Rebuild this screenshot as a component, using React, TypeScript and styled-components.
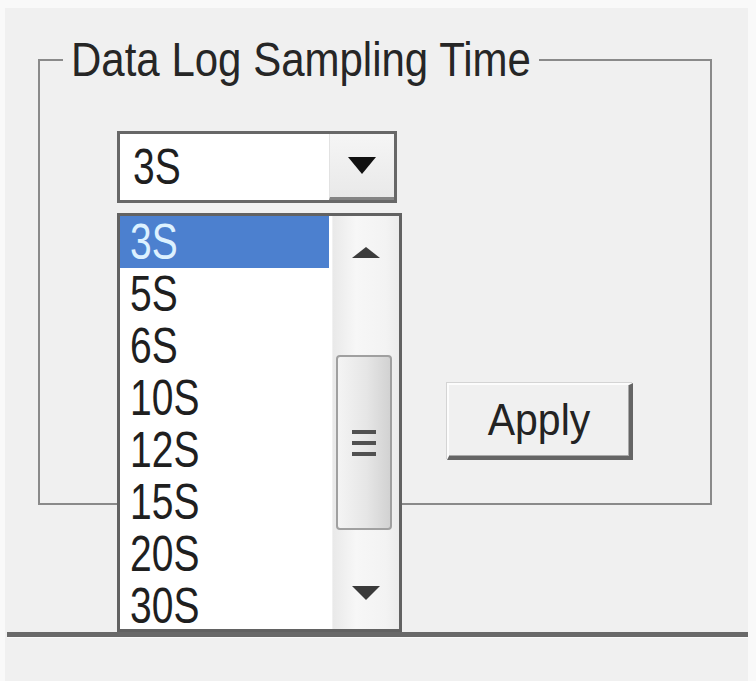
import React from 'react';
import styled, { createGlobalStyle } from 'styled-components';

const GlobalStyle = createGlobalStyle`
  html, body {
    margin: 0;
    padding: 0;
    background: #f9f9f9;
  }
  body {
    font-family: "Liberation Sans", Arial, sans-serif;
    color: #1f1f1f;
  }
`;

const Frame = styled.div`
  width: 756px;
  height: 681px;
  box-sizing: border-box;
  padding: 8px 8px 0 5px;
  background: #f9f9f9;
  overflow: hidden;
`;

const Panel = styled.div`
  height: 100%;
  background: #f0f0f0;
  display: flex;
  flex-direction: column;
`;

// text in the screenshot is stretched vertically, so scale the glyphs
const Glyphs = styled.span<{ $sy: number }>`
  display: inline-block;
  transform: scaleY(${p => p.$sy});
  transform-origin: center;
`;

const GroupBox = styled.fieldset`
  box-sizing: border-box;
  width: 674px;
  height: 466px;
  margin: 31px 0 0 33px;
  padding: 0;
  border: 2px solid #8a8a8a;
  display: flex;
  flex-direction: column;
  align-items: flex-start;
`;

const GroupTitle = styled.legend`
  margin-left: 23px;
  padding: 0 8px;
  font-size: 42px;
  line-height: 42px;
  color: #262626;
`;

const ComboBox = styled.div`
  position: relative;
  box-sizing: border-box;
  width: 280px;
  height: 72px;
  margin: 50px 0 0 77px;
  border: 3px solid #676767;
  display: flex;
  background: #fff;
`;

const ComboField = styled.div`
  flex: 1;
  display: flex;
  align-items: center;
  padding-left: 13px;
  font-size: 39px;
  color: #1f1f1f;
`;

const ComboButton = styled.div`
  width: 65px;
  box-sizing: border-box;
  display: flex;
  align-items: center;
  justify-content: center;
  background: linear-gradient(#f5f5f5, #e9e9e9);
  border-left: 1px solid #e2e2e2;
  border-bottom: 3px solid #858585;
`;

const DropList = styled.div`
  position: absolute;
  z-index: 5;
  top: 79px;
  left: -3px;
  width: 285px;
  height: 419px;
  box-sizing: border-box;
  border: 3px solid #626262;
  background: #fff;
  display: flex;
  overflow: hidden;
`;

const Items = styled.div`
  flex: 1;
  display: flex;
  flex-direction: column;
`;

const Item = styled.div<{ $selected?: boolean }>`
  height: 52px;
  flex-shrink: 0;
  box-sizing: border-box;
  display: flex;
  align-items: center;
  padding-left: 10px;
  margin-right: 3px;
  font-size: 39px;
  color: ${p => (p.$selected ? '#dcf1ff' : '#1f1f1f')};
  background: ${p => (p.$selected ? '#4c80cf' : 'transparent')};
`;

const ScrollBar = styled.div`
  width: 66px;
  display: flex;
  flex-direction: column;
  background: linear-gradient(90deg, #e9e9e9, #f7f7f7 35%, #f3f3f3 80%, #ececec);
  border-left: 1px solid #f1f1f1;
`;

const ArrowButton = styled.div`
  height: 72px;
  display: flex;
  align-items: center;
  justify-content: center;
`;

const Track = styled.div`
  flex: 1;
  display: flex;
  flex-direction: column;
  padding-top: 67px;
`;

const Thumb = styled.div`
  box-sizing: border-box;
  width: 56px;
  height: 175px;
  margin-left: 3px;
  border: 2px solid #a0a0a0;
  border-radius: 4px;
  background: linear-gradient(90deg, #f4f4f4, #e6e6e6 55%, #d2d2d2);
  display: flex;
  flex-direction: column;
  align-items: center;
  justify-content: center;
  gap: 7px;
`;

const GripLine = styled.div`
  width: 24px;
  height: 4px;
  background: #505050;
`;

const ApplyButton = styled.button`
  box-sizing: border-box;
  width: 186px;
  height: 77px;
  margin: 180px 0 0 407px;
  padding: 0;
  background: #f0f0f0;
  border-style: solid;
  border-width: 2px 4px 4px 2px;
  border-color: #fcfcfc #656565 #656565 #fcfcfc;
  box-shadow: inset -1px -1px 0 #a9a9a9, -1px -1px 0 #d4d4d4;
  font-family: "Liberation Sans", Arial, sans-serif;
  font-size: 41px;
  color: #232323;
  cursor: pointer;
`;

const Separator = styled.div`
  height: 5px;
  margin-top: 127px;
  margin-left: 2px;
  background: #696969;
  border-bottom: 1px solid #fafafa;
`;

const options = ['3S', '5S', '6S', '10S', '12S', '15S', '20S', '30S'];

const Triangle: React.FC<{ w: number; h: number; color: string; up?: boolean }> = ({ w, h, color, up }) => (
  <svg width={w} height={h} viewBox={`0 0 ${w} ${h}`}>
    {up ? (
      <path d={`M0 ${h} H${w} L${w / 2} 0 Z`} fill={color} />
    ) : (
      <path d={`M0 0 H${w} L${w / 2} ${h} Z`} fill={color} />
    )}
  </svg>
);

export default function App() {
  const selected = '3S';
  return (
    <>
      <GlobalStyle />
      <Frame>
        <Panel>
          <GroupBox>
            <GroupTitle>
              <Glyphs $sy={1.15}>Data Log Sampling Time</Glyphs>
            </GroupTitle>

            <ComboBox>
              <ComboField>
                <Glyphs $sy={1.28}>{selected}</Glyphs>
              </ComboField>
              <ComboButton>
                <Triangle w={28} h={17} color="#111" />
              </ComboButton>

              <DropList>
                <Items>
                  {options.map(o => (
                    <Item key={o} $selected={o === selected}>
                      <Glyphs $sy={1.28}>{o}</Glyphs>
                    </Item>
                  ))}
                </Items>
                <ScrollBar>
                  <ArrowButton>
                    <Triangle w={28} h={11} color="#3c3c3c" up />
                  </ArrowButton>
                  <Track>
                    <Thumb>
                      <GripLine />
                      <GripLine />
                      <GripLine />
                    </Thumb>
                  </Track>
                  <ArrowButton>
                    <Triangle w={28} h={14} color="#3a3a3a" />
                  </ArrowButton>
                </ScrollBar>
              </DropList>
            </ComboBox>

            <ApplyButton>
              <Glyphs $sy={1.1}>Apply</Glyphs>
            </ApplyButton>
          </GroupBox>

          <Separator />
        </Panel>
      </Frame>
    </>
  );
}
